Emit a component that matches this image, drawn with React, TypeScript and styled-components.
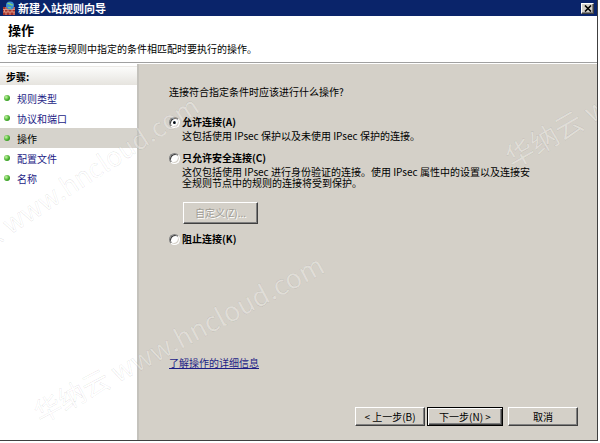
import styled, { createGlobalStyle } from 'styled-components';

const GlobalStyle = createGlobalStyle`
  html, body {
    margin: 0;
    padding: 0;
    background: #fff;
  }
  body {
    font-family: "Noto Sans CJK SC", "Noto Sans", sans-serif;
    font-size: 10px;
    color: #000;
  }
  * {
    box-sizing: border-box;
  }
`;

const Window = styled.div`
  position: relative;
  width: 598px;
  height: 441px;
  border-right: 1px solid #404040;
  border-bottom: 1px solid #404040;
  overflow: hidden;
  display: flex;
  flex-direction: column;
  background: #d4d0c8;
`;

const TitleBar = styled.div`
  height: 16px;
  flex: none;
  background: #0a246a;
  display: flex;
  align-items: center;
  padding: 0 3px 0 2px;
`;

const TitleText = styled.span`
  color: #fff;
  font-weight: bold;
  font-size: 11px;
  line-height: 16px;
  margin-left: 2px;
`;

const CloseButton = styled.div`
  margin-left: auto;
  width: 13px;
  height: 11px;
  background: #d4d0c8;
  border: 1px solid;
  border-color: #fff #404040 #404040 #fff;
  box-shadow: inset -1px -1px #808080;
  display: flex;
  align-items: center;
  justify-content: center;
`;

const Header = styled.div`
  height: 46px;
  flex: none;
  background: #fff;
  padding: 6px 6px 0 8px;
`;

const HeaderTitle = styled.div`
  font-size: 13px;
  font-weight: bold;
  line-height: 16px;
`;

const HeaderSub = styled.div`
  font-size: 10px;
  line-height: 12px;
  margin-top: 5px;
  margin-left: -1px;
`;

const Separator = styled.div`
  height: 2px;
  flex: none;
  border-top: 1px solid #a0a0a0;
  border-bottom: 1px solid #fff;
`;

const Body = styled.div`
  flex: 1;
  display: flex;
  min-height: 0;
`;

const StepsPanel = styled.div`
  width: 139px;
  flex: none;
  background: #fff;
  border-right: 2px solid #c4c2bc;
  padding-top: 2px;
`;

const StepsHeader = styled.div`
  height: 19px;
  line-height: 19px;
  padding-left: 6px;
  font-weight: bold;
  background: linear-gradient(#fcfcfb, #e6e4df);
  border-top: 1px solid #eceae6;
`;

const StepList = styled.div`
  padding-top: 3px;
  display: flex;
  flex-direction: column;
`;

const StepRow = styled.div<{ $current?: boolean }>`
  height: 20px;
  display: flex;
  align-items: center;
  gap: 7px;
  padding-left: 4px;
  background: ${(p) => (p.$current ? '#d6d3cc' : 'transparent')};
  color: ${(p) => (p.$current ? '#000' : '#1d1d86')};
`;

const StepDot = styled.span`
  width: 6px;
  height: 6px;
  border-radius: 50%;
  background: radial-gradient(circle at 35% 35%, #c8f5a8, #46b02c 55%, #21781a);
`;

const Content = styled.div`
  flex: 1;
  display: flex;
  flex-direction: column;
  padding: 22px 19px 14px 30px;
`;

const Question = styled.div`
  line-height: 12px;
`;

const Option = styled.div<{ $gap: number }>`
  margin-top: ${(p) => p.$gap}px;
`;

const RadioRow = styled.div`
  display: flex;
  align-items: center;
  gap: 2px;
  height: 12px;
`;

const Radio = styled.span<{ $checked?: boolean }>`
  position: relative;
  width: 11px;
  height: 11px;
  flex: none;
  border-radius: 50%;
  background: #fff;
  border: 1px solid;
  border-color: #808080 #fff #fff #808080;
  box-shadow: inset 1px 1px #404040, inset -1px -1px #d4d0c8;
  &::after {
    content: '';
    display: ${(p) => (p.$checked ? 'block' : 'none')};
    position: absolute;
    left: 3px;
    top: 3px;
    width: 3px;
    height: 3px;
    border-radius: 50%;
    background: #000;
  }
`;

const RadioLabel = styled.span`
  font-weight: bold;
  line-height: 12px;
`;

const Desc = styled.div<{ $gap: number; $lh: number }>`
  margin-top: ${(p) => p.$gap}px;
  padding-left: 13px;
  line-height: ${(p) => p.$lh}px;
`;

const ClassicButton = styled.button<{ $default?: boolean; $w: number }>`
  width: ${(p) => p.$w}px;
  height: 19px;
  padding: 0;
  font-family: inherit;
  font-size: 10px;
  line-height: 1;
  color: #000;
  background: #d4d0c8;
  border: 1px solid;
  border-color: ${(p) => (p.$default ? '#000' : '#fff #404040 #404040 #fff')};
  box-shadow: ${(p) =>
    p.$default
      ? 'inset 1px 1px #fff, inset -1px -1px #404040, inset -2px -2px #808080'
      : 'inset -1px -1px #808080'};
  &:disabled {
    color: #a09d96;
    text-shadow: 1px 1px #fff;
  }
`;

const CustomButton = styled(ClassicButton)`
  height: 22px;
  margin: 14px 0 0 14px;
`;

const HelpLink = styled.a`
  margin-top: auto;
  align-self: flex-start;
  color: #1d1d86;
  text-decoration: underline;
  line-height: 12px;
`;

const Footer = styled.div`
  margin-top: 38px;
  display: flex;
  justify-content: flex-end;
  gap: 2px;
`;

const CancelWrap = styled.div`
  margin-left: 3px;
`;

const Watermark = styled.span<{ $x: number; $y: number; $angle: number; $size: number }>`
  position: absolute;
  left: ${(p) => p.$x}px;
  top: ${(p) => p.$y}px;
  transform: rotate(${(p) => p.$angle}deg);
  transform-origin: 0 0;
  font-size: ${(p) => p.$size}px;
  line-height: 1.2;
  white-space: nowrap;
  color: rgba(255, 255, 255, 0.3);
  -webkit-text-stroke: 0.4px rgba(0, 0, 0, 0.14);
  pointer-events: none;
`;

const WallIcon = () => (
  <svg width="14" height="14" viewBox="0 0 14 14">
    <rect x="1" y="6" width="12" height="8" fill="#a8322a" />
    <path d="M1 8.5h12M1 11h12M4 6v2.5M8 6v2.5M12 6v2.5M2.5 8.5V11M6 8.5V11M10 8.5V11M4 11v3M8 11v3M12 11v3" stroke="#e9b8a0" strokeWidth="0.7" />
    <circle cx="8" cy="4.5" r="4" fill="#3a8fd8" />
    <path d="M5.5 3c1-1 2-.5 2.5 0s1.5 1.5 3 .5M6 6.5c1 .3 2 0 3 .5" stroke="#7fd36a" strokeWidth="1.2" fill="none" />
  </svg>
);

const CloseGlyph = () => (
  <svg width="8" height="7" viewBox="0 0 8 7">
    <path d="M1 0.5l6 6M7 0.5l-6 6" stroke="#000" strokeWidth="1.6" />
  </svg>
);

const steps = [
  { label: '规则类型' },
  { label: '协议和端口' },
  { label: '操作', current: true },
  { label: '配置文件' },
  { label: '名称' },
];

const watermarks = [
  { x: -75, y: 258, angle: -33, size: 26 },
  { x: 499, y: 145, angle: -30, size: 28 },
  { x: 28, y: 400, angle: -28, size: 27 },
];

export default function App() {
  return (
    <>
      <GlobalStyle />
      <Window>
        <TitleBar>
          <WallIcon />
          <TitleText>新建入站规则向导</TitleText>
          <CloseButton>
            <CloseGlyph />
          </CloseButton>
        </TitleBar>
        <Header>
          <HeaderTitle>操作</HeaderTitle>
          <HeaderSub>指定在连接与规则中指定的条件相匹配时要执行的操作。</HeaderSub>
        </Header>
        <Separator />
        <Body>
          <StepsPanel>
            <StepsHeader>步骤:</StepsHeader>
            <StepList>
              {steps.map((s) => (
                <StepRow key={s.label} $current={s.current}>
                  <StepDot />
                  {s.label}
                </StepRow>
              ))}
            </StepList>
          </StepsPanel>
          <Content>
            <Question>连接符合指定条件时应该进行什么操作?</Question>
            <Option $gap={18}>
              <RadioRow>
                <Radio $checked />
                <RadioLabel>允许连接(A)</RadioLabel>
              </RadioRow>
              <Desc $gap={2} $lh={12}>
                这包括使用 IPsec 保护以及未使用 IPsec 保护的连接。
              </Desc>
            </Option>
            <Option $gap={10}>
              <RadioRow>
                <Radio />
                <RadioLabel>只允许安全连接(C)</RadioLabel>
              </RadioRow>
              <Desc $gap={2} $lh={11}>
                这仅包括使用 IPsec 进行身份验证的连接。使用 IPsec 属性中的设置以及连接安
                <br />
                全规则节点中的规则的连接将受到保护。
              </Desc>
              <CustomButton $w={75} disabled>
                自定义(Z)...
              </CustomButton>
            </Option>
            <Option $gap={9}>
              <RadioRow>
                <Radio />
                <RadioLabel>阻止连接(K)</RadioLabel>
              </RadioRow>
            </Option>
            <HelpLink>了解操作的详细信息</HelpLink>
            <Footer>
              <ClassicButton $w={70}>&lt; 上一步(B)</ClassicButton>
              <ClassicButton $w={76} $default>
                下一步(N) &gt;
              </ClassicButton>
              <CancelWrap>
                <ClassicButton $w={70}>取消</ClassicButton>
              </CancelWrap>
            </Footer>
          </Content>
        </Body>
        {watermarks.map((w, i) => (
          <Watermark key={i} $x={w.x} $y={w.y} $angle={w.angle} $size={w.size}>
            华纳云 www.hncloud.com
          </Watermark>
        ))}
      </Window>
    </>
  );
}
